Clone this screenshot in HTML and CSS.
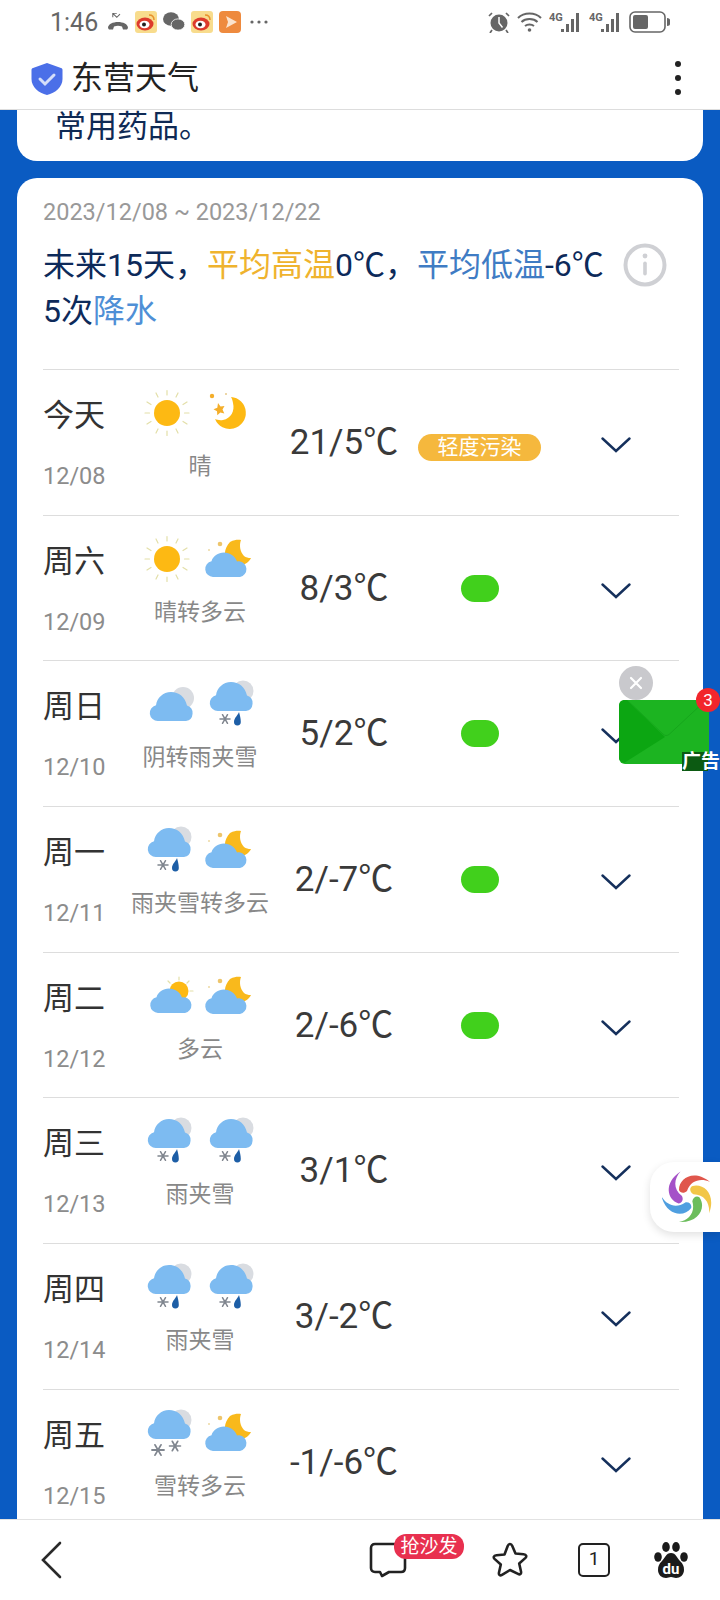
FILE: index.html
```html
<!DOCTYPE html>
<html lang="zh-CN">
<head>
  <meta charset="UTF-8" />
  <title>东营天气</title>
  <link rel="stylesheet" href="styles.css">
</head>
<body>

  <svg class="defs" width="0" height="0">
    <defs>
      <path id="cloudShape" d="M10 43a8 8 0 0 1-1.500-15.800C10 22 15 18.500 21 18.500c6 0 11 3.500 13 9 .8-.2 1.500-.3 2.300-.3a8 8 0 0 1 .7 15.800z" />
      <path id="domeShape" d="M10 43a8 8 0 0 1-2-15.800C9 20 15 14 23 14c8 0 14 5 16 13.500a8 8 0 0 1-1 15.500z" />
      <g id="flake" stroke="#80868f" stroke-width="1.500" stroke-linecap="round">
        <path d="M-5 0H5M-2.500-4.300 2.500 4.300M-2.500 4.300 2.500-4.300" />
      </g>
      <path id="drop" d="M3-7C2-4-2-1-2 3a3.400 3.400 0 0 0 6.800 0C4.800-1 3.800-4 3-7z" fill="#1d5ea6" />
      <path id="petal" d="M-9-7C-9-19 6-28 22-15 13-19 3-17-1-6-4-3-8-4-9-7z" />

      <symbol id="sun" viewBox="0 0 50 50">
        <g stroke="#e3dfa8" stroke-width="1.200" stroke-linecap="round">
          <path d="M25 2.500 25 7M14 5 16 9M36 5 34 9M5 14 9 16.500M45 14 41 16.500M3 25H7.500M47 25H42.500M5 36 9 33.500M45 36 41 33.500M14 45 16 41M36 45 34 41M25 47.500 25 43" />
        </g>
        <circle cx="25" cy="25" r="13" fill="#fdb913" />
      </symbol>

      <symbol id="moon" viewBox="0 0 50 50">
        <path d="M27 9a16 16 0 1 1-16 22c2 1 5 1.500 8 1 8-1.500 12-9 10-17-.3-2-1-4.500-2-6z" fill="#fdb913" />
        <path d="M14 15l2.500 3.500 4-.5-2 3.500 1.800 4-4-1-3 2.800-.3-4-3.500-2 3.800-1.500z" fill="#f4ae2a" />
        <circle cx="8" cy="8" r="2.200" fill="#f4ae2a" />
        <circle cx="22" cy="6" r="1" fill="#e6c98a" />
      </symbol>

      <symbol id="cloudMoon" viewBox="0 0 50 50">
        <path d="M26 8c6-3 9-2 11-2-2 5-1 12 3 16 2 1.500 4 2 7 2-2 4-6 7-10 7H24c-5-7-4-17 2-23z" fill="#f9b91c" />
        <circle cx="16" cy="10" r="2.300" fill="#edc56c" />
        <circle cx="5" cy="16" r="1" fill="#edd9a2" />
        <use href="#cloudShape" x="-1" fill="#7dbbf1" />
      </symbol>

      <symbol id="cloudDay" viewBox="0 0 50 50" overflow="visible">
        <circle cx="37" cy="20" r="9.500" fill="#fdb913" />
        <path d="M37 6v3M47 10l-2 2M26 10l2 2M51 20h-3" stroke="#e3dfa8" stroke-width="1.200" stroke-linecap="round" />
        <use href="#cloudShape" x="6" y="-1" fill="#7dbbf1" />
      </symbol>

      <symbol id="overcast" viewBox="0 0 50 50" overflow="visible">
        <circle cx="41" cy="19" r="11" fill="#d9dce1" />
        <use href="#domeShape" x="6" y="-1" fill="#7dbbf1" />
      </symbol>

      <symbol id="sleet" viewBox="0 0 50 50" overflow="visible">
        <circle cx="39" cy="12" r="10.500" fill="#d9dce1" />
        <use href="#domeShape" x="4" y="-11" fill="#7dbbf1" />
        <use href="#flake" x="21" y="40" />
        <use href="#drop" x="32" y="40" />
      </symbol>

      <symbol id="snow" viewBox="0 0 50 50" overflow="visible">
        <circle cx="39" cy="12" r="10.500" fill="#d9dce1" />
        <use href="#domeShape" x="4" y="-12" fill="#7dbbf1" />
        <use href="#flake" transform="translate(16 42) scale(1.200)" />
        <use href="#flake" transform="translate(33 38) scale(1.100)" />
      </symbol>

      <symbol id="chevron" viewBox="0 0 30 16">
        <path d="M1.500 1.500 15 14 28.500 1.500" fill="none" stroke="#15305c" stroke-width="2.400" stroke-linecap="round" />
      </symbol>

      <symbol id="weibo" viewBox="0 0 22 22">
        <rect width="22" height="22" rx="3" fill="#f8dc8d" />
        <ellipse cx="10" cy="13" rx="8.500" ry="6.500" fill="#dd3b2c" />
        <ellipse cx="9.500" cy="13.500" rx="5" ry="3.800" fill="#fff" />
        <circle cx="9" cy="13.500" r="2" fill="#222" />
        <path d="M14 4c3 0 5 2 5 5" fill="none" stroke="#e8912c" stroke-width="1.500" />
      </symbol>

      <symbol id="signal" viewBox="0 0 33 20">
        <text x="0" y="9" class="net-label">4G</text>
        <rect x="12" y="17" width="3" height="3" fill="#666" />
        <rect x="17" y="12" width="3" height="8" fill="#666" />
        <rect x="22" y="7" width="3" height="13" fill="#666" />
        <rect x="27" y="1" width="3" height="19" fill="#666" />
      </symbol>
    </defs>
  </svg>

  <div class="status-bar">
    <span class="status-time">1:46</span>
    <svg class="ic-phone" width="22" height="18" viewBox="0 0 22 18">
      <path d="M1 15c0-4 5-6 10-6s10 2 10 6l-1 1.500h-4l-1-3c-3-1-5-1-8 0l-1 3H2z" fill="#666" />
      <path d="M6 1l5 5 4-4M11 1H6v5" fill="none" stroke="#666" stroke-width="1.300" transform="translate(1 -.5) scale(.8)" />
    </svg>
    <svg class="ic-app" width="22" height="22"><use href="#weibo" /></svg>
    <svg class="ic-app" width="22" height="22" viewBox="0 0 22 22">
      <ellipse cx="8" cy="8" rx="8" ry="6.800" fill="#666" />
      <ellipse cx="15" cy="13.500" rx="6.800" ry="5.600" fill="#666" stroke="#fff" stroke-width=".8" />
    </svg>
    <svg class="ic-app" width="22" height="22"><use href="#weibo" /></svg>
    <svg class="ic-app" width="22" height="22" viewBox="0 0 22 22">
      <rect width="22" height="22" rx="4" fill="#ee8a3e" />
      <path d="M7 5 18 11 7 17l2-6z" fill="#fbe3cd" />
    </svg>
    <svg class="ic-dots" width="18" height="4" viewBox="0 0 18 4">
      <circle cx="2" cy="2" r="1.600" fill="#666" /><circle cx="9" cy="2" r="1.600" fill="#666" /><circle cx="16" cy="2" r="1.600" fill="#666" />
    </svg>

    <div class="status-right">
      <svg width="22" height="21" viewBox="0 0 22 21">
        <circle cx="11" cy="11" r="8.500" fill="#666" />
        <path d="M11 5v6l3.500 4.500" fill="none" stroke="#fff" stroke-width="1.500" />
        <path d="M1 4l3-3M21 4l-3-3M4 18l-2 3M18 18l2 3" stroke="#666" stroke-width="1.700" />
      </svg>
      <svg width="25" height="20" viewBox="0 0 25 20">
        <path d="M1 6c6-6 17-6 23 0M4.500 10c4-4 12-4 16 0M8 14c2.500-2 6.500-2 9 0" fill="none" stroke="#666" stroke-width="2" />
        <circle cx="12.500" cy="18" r="1.800" fill="#666" />
      </svg>
      <svg class="ic-signal" width="33" height="20"><use href="#signal" /></svg>
      <svg class="ic-signal" width="33" height="20"><use href="#signal" /></svg>
      <svg width="41" height="22" viewBox="0 0 41 22">
        <rect x="1" y="1" width="35" height="20" rx="5" fill="none" stroke="#666" stroke-width="1.600" />
        <rect x="4" y="4" width="15" height="14" rx="2" fill="#666" />
        <path d="M38 7c2 0 3 1 3 2v4c0 1-1 2-3 2z" fill="#666" />
      </svg>
    </div>
  </div>

  <div class="top-header">
    <svg class="shield" width="32" height="34" viewBox="0 0 32 34">
      <path d="M16 1 30 6c1 0 1.500 1 1.500 2v9c0 8-7 14-15.500 16C7.500 31 .5 25 .5 17V8c0-1 .5-2 1.500-2z" fill="#4b6fe8" />
      <path d="M9 17l5 5 9-9" fill="none" stroke="#d5def9" stroke-width="3" stroke-linecap="round" />
    </svg>
    <span class="top-title">东营天气</span>
    <svg class="more" width="8" height="36" viewBox="0 0 8 36">
      <circle cx="4" cy="4" r="3" fill="#222" /><circle cx="4" cy="18" r="3" fill="#222" /><circle cx="4" cy="32" r="3" fill="#222" />
    </svg>
  </div>

  <div class="page">
    <div class="card tip-card">常用药品。</div>

    <div class="card forecast-card">
      <div class="date-range">2023/12/08 ~ 2023/12/22</div>
      <div class="summary">
        <p>未来15天，<span class="hot">平均高温</span>0℃，<span class="cold">平均低温</span>-6℃<br>5次<span class="rain">降水</span></p>
        <svg class="info" width="44" height="44" viewBox="0 0 44 44">
          <circle cx="22" cy="22" r="19.500" fill="none" stroke="#cfd0d4" stroke-width="4" />
          <circle cx="22" cy="13" r="2.400" fill="#cfd0d4" />
          <rect x="20.200" y="18.500" width="3.600" height="14" rx="1.800" fill="#cfd0d4" />
        </svg>
      </div>

      <div class="day-row">
        <div class="day-col"><div class="day-name">今天</div><div class="day-date">12/08</div></div>
        <div class="wx-col">
          <div class="wx-icons"><svg><use href="#sun" /></svg><svg><use href="#moon" /></svg></div>
          <div class="wx-text">晴</div>
        </div>
        <div class="temp">21/5℃</div>
        <div class="aqi-col"><span class="aqi aqi-light">轻度污染</span></div>
        <svg class="expand"><use href="#chevron" /></svg>
      </div>

      <div class="day-row">
        <div class="day-col"><div class="day-name">周六</div><div class="day-date">12/09</div></div>
        <div class="wx-col">
          <div class="wx-icons"><svg><use href="#sun" /></svg><svg><use href="#cloudMoon" /></svg></div>
          <div class="wx-text">晴转多云</div>
        </div>
        <div class="temp">8/3℃</div>
        <div class="aqi-col"><span class="aqi aqi-good"></span></div>
        <svg class="expand"><use href="#chevron" /></svg>
      </div>

      <div class="day-row">
        <div class="day-col"><div class="day-name">周日</div><div class="day-date">12/10</div></div>
        <div class="wx-col">
          <div class="wx-icons"><svg><use href="#overcast" /></svg><svg><use href="#sleet" /></svg></div>
          <div class="wx-text">阴转雨夹雪</div>
        </div>
        <div class="temp">5/2℃</div>
        <div class="aqi-col"><span class="aqi aqi-good"></span></div>
        <svg class="expand"><use href="#chevron" /></svg>
      </div>

      <div class="day-row">
        <div class="day-col"><div class="day-name">周一</div><div class="day-date">12/11</div></div>
        <div class="wx-col">
          <div class="wx-icons"><svg><use href="#sleet" /></svg><svg><use href="#cloudMoon" /></svg></div>
          <div class="wx-text">雨夹雪转多云</div>
        </div>
        <div class="temp">2/-7℃</div>
        <div class="aqi-col"><span class="aqi aqi-good"></span></div>
        <svg class="expand"><use href="#chevron" /></svg>
      </div>

      <div class="day-row">
        <div class="day-col"><div class="day-name">周二</div><div class="day-date">12/12</div></div>
        <div class="wx-col">
          <div class="wx-icons"><svg><use href="#cloudDay" /></svg><svg><use href="#cloudMoon" /></svg></div>
          <div class="wx-text">多云</div>
        </div>
        <div class="temp">2/-6℃</div>
        <div class="aqi-col"><span class="aqi aqi-good"></span></div>
        <svg class="expand"><use href="#chevron" /></svg>
      </div>

      <div class="day-row">
        <div class="day-col"><div class="day-name">周三</div><div class="day-date">12/13</div></div>
        <div class="wx-col">
          <div class="wx-icons"><svg><use href="#sleet" /></svg><svg><use href="#sleet" /></svg></div>
          <div class="wx-text">雨夹雪</div>
        </div>
        <div class="temp">3/1℃</div>
        <div class="aqi-col"></div>
        <svg class="expand"><use href="#chevron" /></svg>
      </div>

      <div class="day-row">
        <div class="day-col"><div class="day-name">周四</div><div class="day-date">12/14</div></div>
        <div class="wx-col">
          <div class="wx-icons"><svg><use href="#sleet" /></svg><svg><use href="#sleet" /></svg></div>
          <div class="wx-text">雨夹雪</div>
        </div>
        <div class="temp">3/-2℃</div>
        <div class="aqi-col"></div>
        <svg class="expand"><use href="#chevron" /></svg>
      </div>

      <div class="day-row">
        <div class="day-col"><div class="day-name">周五</div><div class="day-date">12/15</div></div>
        <div class="wx-col">
          <div class="wx-icons"><svg><use href="#snow" /></svg><svg><use href="#cloudMoon" /></svg></div>
          <div class="wx-text">雪转多云</div>
        </div>
        <div class="temp">-1/-6℃</div>
        <div class="aqi-col"></div>
        <svg class="expand"><use href="#chevron" /></svg>
      </div>
    </div>
  </div>

  <div class="bottom-bar">
    <svg class="back" width="22" height="38" viewBox="0 0 22 38">
      <path d="M20 2 3 19l17 17" fill="none" stroke="#2a2a2a" stroke-width="2.600" stroke-linecap="round" />
    </svg>
    <div class="comment-wrap">
      <svg width="38" height="36" viewBox="0 0 38 36">
        <path d="M6 2h26c2.500 0 4 1.500 4 4v20c0 2.500-1.500 4-4 4H20l-7 4-2-4H6c-2.500 0-4-1.500-4-4V6c0-2.500 1.500-4 4-4z" fill="#fff" stroke="#222" stroke-width="2.600" stroke-linejoin="round" />
      </svg>
      <span class="sofa">抢沙发</span>
    </div>
    <svg class="star" width="38" height="38" viewBox="0 0 38 38">
      <path d="M19 3c1 0 1.800.8 2.300 2l3.200 7.500 8 .8c3 .3 3.500 2 1.700 3.800l-6 5.400 1.800 8c.5 2.500-1 3.500-3 2.300L19 29l-8 4.800c-2 1.200-3.500.2-3-2.300l1.800-8-6-5.400c-1.800-1.800-1.300-3.500 1.700-3.800l8-.8L16.700 5c.5-1.200 1.300-2 2.300-2z" fill="none" stroke="#222" stroke-width="2.600" stroke-linejoin="round" />
    </svg>
    <div class="tabs-count">1</div>
    <svg class="paw" width="38" height="38" viewBox="0 0 38 38">
      <ellipse cx="6" cy="16" rx="3.800" ry="4.800" fill="#1b1b1b" />
      <ellipse cx="14" cy="6" rx="3.800" ry="5" fill="#1b1b1b" />
      <ellipse cx="24" cy="6" rx="3.800" ry="5" fill="#1b1b1b" />
      <ellipse cx="32" cy="16" rx="3.800" ry="4.800" fill="#1b1b1b" />
      <path d="M19 12c5 0 6 5 9 8 3 3 4 5 4 9 0 5-4 8-8 8-2 0-3-1-5-1s-3 1-5 1c-4 0-8-3-8-8 0-4 1-6 4-9 3-3 4-8 9-8z" fill="#1b1b1b" />
      <text x="19" y="33" class="du-mark">du</text>
    </svg>
  </div>

  <!-- floating stuff over the page -->
  <div class="ad-close">
    <svg width="14" height="14" viewBox="0 0 14 14"><path d="M2 2l10 10M12 2 2 12" stroke="#fff" stroke-width="2.200" stroke-linecap="round" /></svg>
  </div>
  <svg class="ad-mail" width="90" height="64" viewBox="0 0 90 64">
    <rect width="90" height="64" rx="6" fill="#1cb421" />
    <path d="M0 6C0 2 2 0 6 0h2l38 37L5 63C2 62 0 60 0 58z" fill="#0ca612" />
    <path d="M8 0 44 34c2 2 4 2 6 .500L86 1" fill="none" stroke="#16a61c" stroke-width="1" />
  </svg>
  <span class="ad-count">3</span>
  <span class="ad-label">广告</span>

  <div class="float-app">
    <svg width="52" height="52" viewBox="-26 -26 52 52">
      <use href="#petal" fill="#a552c8" transform="rotate(-72)" />
      <use href="#petal" fill="#e0564c" />
      <use href="#petal" fill="#f2c648" transform="rotate(72)" />
      <use href="#petal" fill="#6cbd5c" transform="rotate(144)" />
      <use href="#petal" fill="#4f9fe0" transform="rotate(216)" />
    </svg>
  </div>

</body>
</html>
```

FILE: styles.css
```css
* {
  box-sizing: border-box;
}

html, body {
  height: 100%;
}

body {
  margin: 0;
  width: 720px;
  height: 1600px;
  position: relative;
  overflow: hidden;
  display: flex;
  flex-direction: column;
  font-family: Roboto, "Noto Sans CJK SC", sans-serif;
  background-color: #0a5bc2;
  color: #333;
}

.defs {
  position: absolute;
}

/* status bar */
.status-bar {
  height: 48px;
  flex: none;
  background: #fff;
  display: flex;
  align-items: center;
  padding: 0 50px 4px 50px;
  position: relative;
  z-index: 2;
}

.status-time {
  width: 57px;
  font-size: 25px;
  color: #666;
}

.ic-app {
  margin-right: 6px;
}

.ic-phone {
  margin-right: 6px;
}

.ic-dots {
  margin-left: 3px;
}

.status-right {
  margin-left: auto;
  display: flex;
  align-items: center;
  gap: 7px;
}

.net-label {
  font-family: Roboto, sans-serif;
  font-size: 11px;
  font-weight: 700;
  fill: #666;
}

/* header */
.top-header {
  height: 62px;
  flex: none;
  background: #fff;
  border-bottom: 1px solid #ddd;
  display: flex;
  align-items: center;
  padding: 0 38px 0 31px;
  position: relative;
  z-index: 2;
}

.top-title {
  margin-left: 8px;
  margin-top: -2px;
  font-size: 32px;
  line-height: 40px;
  color: #222;
}

.more {
  margin-left: auto;
  margin-top: -2px;
}

/* content */
.page {
  flex: 1;
  min-height: 0;
  padding: 0 17px;
}

.card {
  background: #fff;
}

.tip-card {
  height: 51px;
  border-radius: 0 0 20px 20px;
  padding-left: 38px;
  font-size: 31px;
  line-height: 34px;
  color: #0f2a55;
}

.forecast-card {
  margin-top: 17px;
  border-radius: 20px 20px 0 0;
  padding: 17px 24px 0 26px;
}

.date-range {
  font-size: 23.5px;
  line-height: 34px;
  color: #999;
}

.summary {
  margin-top: 13px;
  height: 127px;
  display: flex;
  align-items: flex-start;
  justify-content: space-between;
}

.summary p {
  margin: 0;
  font-size: 32px;
  line-height: 46px;
  color: #0d2a5a;
  white-space: nowrap;
}

.hot {
  color: #efb32e;
}

.cold {
  color: #3f7cc4;
}

.rain {
  color: #4f8fd6;
}

.info {
  margin: 1px 12px 0 0;
}

/* forecast rows */
.day-row {
  height: 145.7px;
  border-top: 1px solid #ddd;
  display: grid;
  grid-template-columns: 87px 140px 148px 123px 1fr;
  align-items: start;
}

.day-col {
  padding-top: 26px;
}

.day-name {
  font-size: 31px;
  line-height: 40px;
  color: #333;
}

.day-date {
  margin-top: 25px;
  font-size: 23.5px;
  line-height: 30px;
  color: #8c8c8c;
}

.wx-col {
  padding-top: 18px;
  text-align: center;
}

.wx-icons {
  display: flex;
  justify-content: center;
  gap: 12px;
  margin-left: -5px;
}

.wx-icons svg {
  width: 50px;
  height: 50px;
  overflow: visible;
}

.wx-text {
  margin-top: 14px;
  font-size: 23px;
  line-height: 30px;
  color: #888;
}

.temp {
  padding-top: 51px;
  text-align: center;
  font-size: 35px;
  line-height: 44px;
  color: #3a3a3a;
}

.aqi-col {
  padding-top: 64px;
  text-align: center;
}

.aqi {
  display: inline-block;
  height: 27px;
  border-radius: 14px;
  font-size: 21px;
  line-height: 27px;
  color: #fff;
  vertical-align: top;
}

.aqi-light {
  width: 123px;
  background: #f5b83d;
}

.aqi-good {
  width: 38px;
  margin-top: -5px;
  background: #41d01c;
}

.expand {
  width: 30px;
  height: 16px;
  margin: 67px 0 0 60px;
}

/* bottom bar */
.bottom-bar {
  height: 81px;
  flex: none;
  background: #fff;
  border-top: 1px solid #e2e2e2;
  display: flex;
  align-items: center;
  padding: 0 30px 0 40px;
  position: relative;
  z-index: 2;
}

.comment-wrap {
  position: relative;
  margin-left: auto;
  margin-right: 84px;
  display: flex;
}

.sofa {
  position: absolute;
  left: 25px;
  top: -8px;
  width: 70px;
  height: 25px;
  border-radius: 12px;
  background: #e8304f;
  color: #fff;
  font-size: 19px;
  line-height: 25px;
  text-align: center;
}

.star {
  margin-right: 49px;
}

.tabs-count {
  width: 32px;
  height: 34px;
  border: 2.5px solid #222;
  border-radius: 5px;
  margin-right: 42px;
  font-size: 19px;
  line-height: 28px;
  text-align: center;
  color: #222;
}

.du-mark {
  font-family: Roboto, sans-serif;
  font-size: 15px;
  font-weight: 700;
  fill: #fff;
  text-anchor: middle;
}

/* ad + floating button */
.ad-close,
.ad-mail,
.ad-count,
.ad-label,
.float-app {
  z-index: 3;
}

.ad-close {
  position: absolute;
  left: 619px;
  top: 666px;
  width: 34px;
  height: 34px;
  border-radius: 50%;
  background: #c9c9cd;
  display: flex;
  align-items: center;
  justify-content: center;
}

.ad-mail {
  position: absolute;
  left: 619px;
  top: 700px;
}

.ad-count {
  position: absolute;
  left: 696px;
  top: 688px;
  width: 24px;
  height: 24px;
  border-radius: 50%;
  background: #f2262c;
  color: #fff;
  font-size: 17px;
  line-height: 24px;
  text-align: center;
}

.ad-label {
  position: absolute;
  left: 682px;
  top: 752px;
  width: 38px;
  height: 19px;
  font-size: 19px;
  line-height: 19px;
  font-weight: 700;
  color: #fff;
  white-space: nowrap;
  background: linear-gradient(90deg, #0c5a12 0 26px, transparent 26px);
}

.float-app {
  position: absolute;
  right: 0;
  top: 1162px;
  width: 70px;
  height: 70px;
  background: #fff;
  border-radius: 24px 0 0 24px;
  box-shadow: 0 3px 8px rgba(0, 0, 0, 0.12);
  display: flex;
  align-items: center;
  padding-left: 12px;
}
```
